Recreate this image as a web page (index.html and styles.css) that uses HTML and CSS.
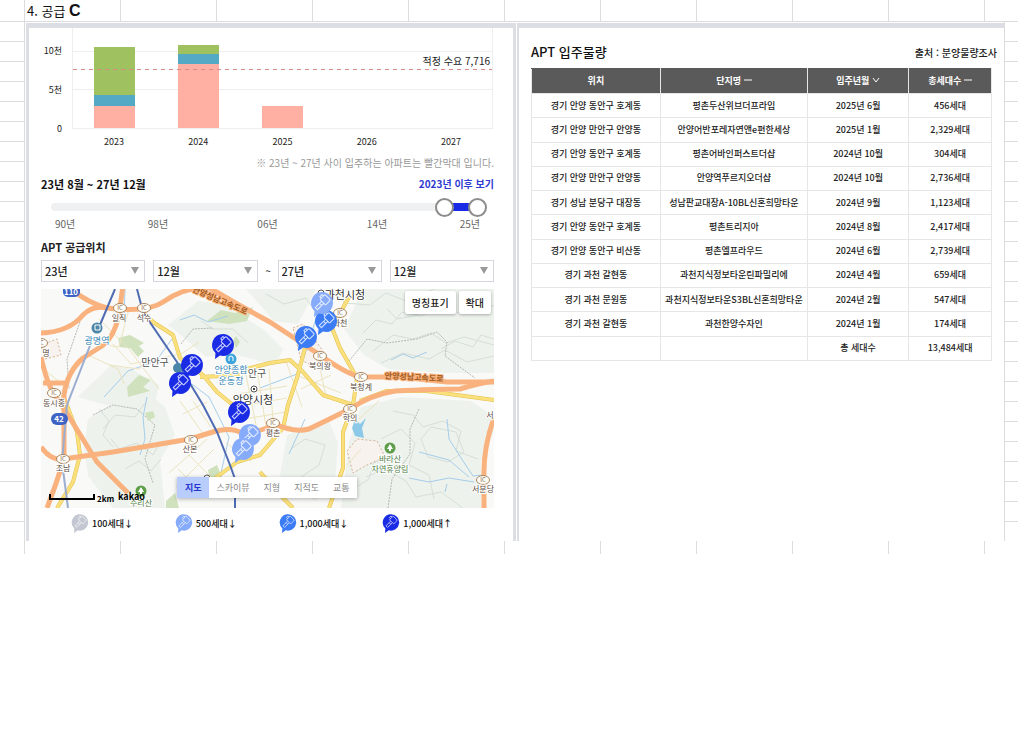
FILE: index.html
```html
<!DOCTYPE html>
<html lang="ko">

<head>
    <meta charset="UTF-8">
    <meta name="viewport" content="width=device-width, initial-scale=1.0">
    <title>공급</title>
    <link rel="stylesheet" href="styles.css">
</head>

<body>
    <div class="sheet">
        <header class="sheet-title">
            <h1>4. 공급 <b>C</b></h1>
        </header>
        <main class="sheet-body">
            <div class="gutter gutter-left"></div>
            <div class="panels">
                <section class="panel supply">
                    <div class="chart">
                        <div class="y-axis">
                            <span class="tick">10천</span>
                            <span class="tick">5천</span>
                            <span class="tick">0</span>
                        </div>
                        <div class="plot">
                            <div class="bar">
                                <i class="green" style="height: 48px"></i>
                                <i class="blue" style="height: 11px"></i>
                                <i class="pink" style="height: 22px"></i>
                            </div>
                            <div class="bar">
                                <i class="green" style="height: 9px"></i>
                                <i class="blue" style="height: 10px"></i>
                                <i class="pink" style="height: 64px"></i>
                            </div>
                            <div class="bar">
                                <i class="pink" style="height: 22px"></i>
                            </div>
                            <div class="bar"></div>
                            <div class="bar"></div>
                            <div class="demand">적정 수요 7,716</div>
                        </div>
                    </div>
                    <div class="x-axis">
                        <span>2023</span><span>2024</span><span>2025</span><span>2026</span><span>2027</span>
                    </div>
                    <p class="note">※ 23년 ~ 27년 사이 입주하는 아파트는 빨간막대 입니다.</p>

                    <div class="period">
                        <h2>23년 8월 ~ 27년 12월</h2>
                        <a href="#recent">2023년 이후 보기</a>
                    </div>
                    <div class="slider">
                        <div class="range"></div>
                        <input type="range" min="0" max="100" value="92" aria-label="시작">
                        <input type="range" min="0" max="100" value="100" aria-label="종료">
                    </div>
                    <div class="years">
                        <span>90년</span><span>98년</span><span>06년</span><span>14년</span><span>25년</span>
                    </div>

                    <h2 class="location-title">APT 공급위치</h2>
                    <div class="filters">
                        <div class="select"><select aria-label="시작 연도"><option>23년</option></select></div>
                        <div class="select"><select aria-label="시작 월"><option>12월</option></select></div>
                        <span class="tilde">~</span>
                        <div class="select"><select aria-label="종료 연도"><option>27년</option></select></div>
                        <div class="select"><select aria-label="종료 월"><option>12월</option></select></div>
                    </div>

                    <div class="map">
                        <svg class="map-canvas" viewBox="0 0 453 219" preserveAspectRatio="xMidYMid slice">
                            <defs>
                                <g id="pin">
                                    <path d="M0-11a11 11 0 1 1-3 21.600L-8 14l.5-6A11 11 0 0 1 0-11z"/>
                                    <g fill="none" stroke="#fff" stroke-opacity=".8" transform="rotate(45)">
                                        <rect x="-4" y="-8" width="8" height="7" rx="1"/>
                                        <path d="M-1.500-1V8h3v-9M-4-6h-2v3h2M-1.500 2h3"/>
                                    </g>
                                </g>
                                <g id="ic">
                                    <ellipse rx="6.500" ry="4.500" fill="#fffdf8" stroke="#a8845f"/>
                                    <text y="2" class="ic-text">IC</text>
                                </g>
                                <path id="main-roads" d="M102 23l10 10 20 13 7 23 23 17 14 17 16 13M159 88l43-2M202 81l27-7 20-3 13 12 20 23 30 10M309 6l-18 33 8 20 17 30-4 27-10 27v36l-14 40M264 59l-8 30-9 27-5 23-23 27-23 7-27 20M319 112l27-10h40l67 9M22 106l14 37 3 23-7 27-16 26M219 183l23 26 10 10"/>
                            </defs>

                            <!-- terrain -->
                            <g fill="#edf2ed">
                                <path d="M127 36l30-24 25 3 40 25 20 20-8 16-45-12-24 4-30-26z"/>
                                <path d="M47 130l30-20 25-10 22 18 10 28-15 25 5 48H72l-25-32-4-30z"/>
                                <path d="M205 0h70l-18 35-24-3zM322 0h131v84h-48l-58-4-24-14-20-26z"/>
                                <path d="M320 118l40-10 70 4 23 16v14l-13 30v47H300l8-66z"/>
                                <path d="M246 146l42-14 9 22-3 38-20 20-35-25z"/>
                                <path d="M70 76l20 4 28 16-4 18-35 6-42-12z"/>
                            </g>
                            <g fill="none" stroke="#d5dfd7">
                                <path d="M322 44l13-13 16 4 10-12 20 4 17-11 20 8 12-10 23 3M332 62l20-16 20 4 18-6 15 10 18-6 30 8"/>
                                <path d="M340 74l22-10 26 6 16-9 22 12 27-6M290 0l14 14 25 2 16-12 20 8 28-12"/>
                                <path d="M352 122l20 4 10 12 20-6 18 10-5 20 22 8M340 150l20-10 14 14-6 22 20 10 5 24M325 188l18-8 22 12 10 16 25-5 22 16"/>
                                <path d="M62 140l12-14 20 2 10-14M70 150l8 10 18-6 16 12 8-14M84 180l14-8 12 10 10-12M250 160l14-10 20 6-6 20-18 12"/>
                                <path d="M380 150l10-12 25 5 8 20-16 10-20-5zM225 5l18 10 22-6 8 12M160 32l12 8 20 0 15 14"/>
                                <path d="M400 60l14-8 18 6 8-12 13 4M346 20l10 10 22-4M58 120l10 12-6 14 10 12M312 200l16-10 4-16 16-6"/>
                            </g>
                            <g fill="none" stroke="#b5b9b2" stroke-dasharray="2 1">
                                <path d="M308 72l18-22 20 4 30-4 20-7 10 10-2 14 30 22M378 120l-9 20v25l-18 25-4 29M40 30l-14 40 2 30M140 55l12-15 20-1M52 126l20-10 24 4 18 16-10 34 8 24"/>
                            </g>
                            <g fill="#cfe2bd">
                                <path d="M166 32l14-11 14 3 18-6-6 14-18 3zM77 49l12-3 14 8-10 6-14-2zM90 60l8-3 5 5-6 6zM86 98l12-12 12 5-8 7 7 4-22 6zM104 124l8-2 2 6-7 4zM167 181l9-5 5 12-12 4zM125 212l9-8 4 15h-13z"/>
                                <path d="M195 47l4 6-4 6-3-7z"/>
                            </g>
                            <g fill="#f7f2ed" stroke="#d4b095" stroke-dasharray="2 2">
                                <path d="M306 162l10-12 20 2 8 16-18 8-14 8zM252 39l10-4 8 10 14 20-8 14-16-8z"/>
                                <path d="M0 56l16-6 4 16-16 4z"/>
                            </g>

                            <!-- water -->
                            <path d="M314 130l5 5 6-6-4 10 2 10-9-2-3-8z" fill="#8cc8e8"/>
                            <g fill="none" stroke="#a5cdea">
                                <path d="M84 0l-1 30M63 108l24-26 28-10 16-22M106 108l-4 20 2 22-5 16M139 31l14-5 14 7 20-6M350 71l12-6 10 4 14-6"/>
                                <path d="M406 130l2 20 14 22 10 15 10-1M378 163l30 8 20 17M368 189l20 4 20-4 25 4M404 203l2-8"/>
                                <path d="M281 10l-17 55-8 20-37 14M148 93l20 15 20 40-10 45M264 130l-16 35"/>
                            </g>

                            <!-- local streets -->
                            <g fill="none" stroke="#ece4bf">
                                <path d="M58 30l30 30 30 40M72 55l18 20 50-10 18-12M88 20l-10 38-28-4M106 70l-8 10-30-4M139 112l24 34 20-6M152 112l18 26M142 125l24-12M128 184l38-34M135 198l38-38M148 166l28 28M137 180l18 18M185 154l25 18"/>
                                <path d="M205 86l12 60M216 80l10 64M228 80l4 50M197 105l49-8M200 117l46-8M203 130l42-7M210 142l40-5M245 72l16 46M255 86l45 18M260 100l30-14M279 80l6 27M320 160l-14 16M318 130l20-18M45 65l32 15 6 15M0 78l20 16"/>
                            </g>
                            <g fill="none" stroke-linejoin="round">
                                <use href="#main-roads" stroke="#e3c050" stroke-width="4"/>
                                <use href="#main-roads" stroke="#fae07c" stroke-width="3"/>
                            </g>

                            <!-- expressways -->
                            <g fill="none" stroke="#f9b27e" stroke-width="5" stroke-linejoin="round">
                                <path d="M26-4q16 16 40 23 40 5 56-6 23-16 47-14 30 18 60 34l50 33q25 18 40 22h40l47 5h47"/>
                                <path d="M0 44q28-1 42-18 10-10 24-7M82-4l-3 23q-4 28-18 38l-19 12q-16 14-19 37v64q-8 26-17 49"/>
                                <path d="M0 68q6 26 12 35l15 23 29 47 31 31M0 158q10 14 22 12l50-7 77-13 26-8q15-4 26 2 26-2 31-10 20 10 36 6l41-20q20-14 45-18 40-2 65-2 20-6 34-8M2 94h22M453 129q-11 30-10 60v30"/>
                            </g>

                            <!-- rail -->
                            <g fill="none" stroke="#4f6cb3" stroke-width="2">
                                <path d="M74 0L56 43M96 0l6 23 34 50 26 43 14 27 13 33 5 14v29"/>
                                <path d="M50 54L26 116l-5 57 6 46" stroke="#9badd0"/>
                            </g>

                            <use href="#ic" x="79" y="19"/>
                            <use href="#ic" x="103" y="19"/>
                            <use href="#ic" x="0" y="54"/>
                            <use href="#ic" x="13" y="104"/>
                            <use href="#ic" x="22" y="170"/>
                            <use href="#ic" x="150" y="151"/>
                            <use href="#ic" x="232" y="134"/>
                            <use href="#ic" x="299" y="24"/>
                            <use href="#ic" x="279" y="67"/>
                            <use href="#ic" x="320" y="88"/>
                            <use href="#ic" x="309" y="120"/>
                            <use href="#ic" x="442" y="191"/>

                            <g class="road-badge">
                                <rect x="22" y="-5" width="17" height="13" rx="5"/>
                                <rect x="10" y="124" width="17" height="12" rx="6"/>
                                <text x="30" y="6">110</text>
                                <text x="18" y="133">42</text>
                            </g>
                            <g fill="#4b86a8">
                                <circle cx="56" cy="39" r="5.500"/>
                                <circle cx="137" cy="79" r="5"/>
                                <circle cx="190" cy="70" r="5.500" fill="#3da5dc"/>
                            </g>
                            <path d="M54 36h5v5h-5zM188 72v-4l2-1 2 1v4" fill="none" stroke="#fff"/>
                            <g fill="#fff" stroke="#555">
                                <circle cx="213" cy="100" r="3"/>
                                <circle cx="280" cy="4" r="3"/>
                                <circle cx="166" cy="189" r="3"/>
                            </g>
                            <circle cx="213" cy="100" r="1"/>
                            <g fill="#5e9d4a">
                                <circle cx="349" cy="159" r="5.500"/>
                                <circle cx="100" cy="202" r="5.500"/>
                            </g>
                            <path d="M349 155l3 5h-2v2h-2v-2h-2zM100 198l3 5h-2v2h-2v-2h-2z" fill="#fff"/>

                            <g class="place">
                                <text x="78" y="32">일직</text>
                                <text x="103" y="32">석수</text>
                                <text x="5" y="67">명</text>
                                <text x="13" y="117">동시흥</text>
                                <text x="22" y="182">조남</text>
                                <text x="149" y="163">산본</text>
                                <text x="232" y="147">평촌</text>
                                <text x="299" y="37">과천</text>
                                <text x="279" y="80">북의왕</text>
                                <text x="320" y="101">북청계</text>
                                <text x="309" y="132">학의</text>
                                <text x="442" y="203">서분당</text>
                                <text x="449" y="129">서</text>
                            </g>
                            <g class="place district">
                                <text x="114" y="77">만안구</text>
                                <text x="216" y="88">안구</text>
                            </g>
                            <g class="place city">
                                <text x="212" y="115">안양시청</text>
                                <text x="304" y="10">과천시청</text>
                            </g>
                            <g class="place station">
                                <text x="56" y="55">광명역</text>
                                <text x="190" y="84">안양종합</text>
                                <text x="190" y="95">운동장</text>
                            </g>
                            <g class="place park">
                                <text x="349" y="173">바라산</text>
                                <text x="349" y="183">자연휴양림</text>
                                <text x="100" y="217">수리산</text>
                            </g>
                            <g class="place highway">
                                <text transform="translate(178 14) rotate(23)">안양성남고속도로</text>
                                <text transform="translate(373 91) rotate(3)">안양성남고속도로</text>
                            </g>

                            <g class="pin-mid">
                                <use href="#pin" x="285" y="32"/>
                                <use href="#pin" x="265" y="48"/>
                            </g>
                            <g class="pin-low">
                                <use href="#pin" x="281" y="14"/>
                                <use href="#pin" x="209" y="146"/>
                                <use href="#pin" x="202" y="160"/>
                            </g>
                            <g class="pin-high">
                                <use href="#pin" x="182" y="56"/>
                                <use href="#pin" x="151" y="76"/>
                                <use href="#pin" x="139" y="94"/>
                                <use href="#pin" x="198" y="123"/>
                            </g>

                            <path d="M9 205v5h44v-5" fill="none" stroke="#000" stroke-width="2"/>
                            <text x="56" y="213" class="scale">2km</text>
                            <text x="77" y="211" class="logo">kakao</text>
                        </svg>
                        <div class="map-actions">
                            <button type="button">명칭표기</button>
                            <button type="button">확대</button>
                        </div>
                        <div class="map-types">
                            <button type="button" class="active">지도</button>
                            <button type="button">스카이뷰</button>
                            <button type="button">지형</button>
                            <button type="button">지적도</button>
                            <button type="button">교통</button>
                        </div>
                    </div>

                    <ul class="legend">
                        <li><svg class="pin-none" viewBox="-12 -12 24 27"><use href="#pin"/></svg>100세대↓</li>
                        <li><svg class="pin-low" viewBox="-12 -12 24 27"><use href="#pin"/></svg>500세대↓</li>
                        <li><svg class="pin-mid" viewBox="-12 -12 24 27"><use href="#pin"/></svg>1,000세대↓</li>
                        <li><svg class="pin-high" viewBox="-12 -12 24 27"><use href="#pin"/></svg>1,000세대↑</li>
                    </ul>
                </section>

                <section class="panel volume">
                    <div class="volume-head">
                        <h2>APT 입주물량</h2>
                        <span>출처 : 분양물량조사</span>
                    </div>
                    <table>
                        <thead>
                            <tr>
                                <th class="col-place">위치</th>
                                <th class="col-name">단지명 <svg class="sort" viewBox="0 0 8 8"><path d="M0 4h8"/></svg></th>
                                <th class="col-date">입주년월 <svg class="sort" viewBox="0 0 8 8"><path d="M1 2l3 4 3-4"/></svg></th>
                                <th class="col-count">총세대수 <svg class="sort" viewBox="0 0 8 8"><path d="M0 4h8"/></svg></th>
                            </tr>
                        </thead>
                        <tbody>
                            <tr><td>경기 안양 동안구 호계동</td><td>평촌두산위브더프라임</td><td>2025년 6월</td><td>456세대</td></tr>
                            <tr><td>경기 안양 만안구 안양동</td><td>안양어반포레자연앤e편한세상</td><td>2025년 1월</td><td>2,329세대</td></tr>
                            <tr><td>경기 안양 동안구 호계동</td><td>평촌어바인퍼스트더샵</td><td>2024년 10월</td><td>304세대</td></tr>
                            <tr><td>경기 안양 만안구 안양동</td><td>안양역푸르지오더샵</td><td>2024년 10월</td><td>2,736세대</td></tr>
                            <tr><td>경기 성남 분당구 대장동</td><td>성남판교대장A-10BL신혼희망타운</td><td>2024년 9월</td><td>1,123세대</td></tr>
                            <tr><td>경기 안양 동안구 호계동</td><td>평촌트리지아</td><td>2024년 8월</td><td>2,417세대</td></tr>
                            <tr><td>경기 안양 동안구 비산동</td><td>평촌엘프라우드</td><td>2024년 6월</td><td>2,739세대</td></tr>
                            <tr><td>경기 과천 갈현동</td><td>과천지식정보타운린파밀리에</td><td>2024년 4월</td><td>659세대</td></tr>
                            <tr><td>경기 과천 문원동</td><td>과천지식정보타운S3BL신혼희망타운</td><td>2024년 2월</td><td>547세대</td></tr>
                            <tr><td>경기 과천 갈현동</td><td>과천한양수자인</td><td>2024년 1월</td><td>174세대</td></tr>
                            <tr><td></td><td></td><td>총 세대수</td><td>13,484세대</td></tr>
                        </tbody>
                    </table>
                </section>
            </div>
            <div class="gutter gutter-right"></div>
        </main>
        <div class="sheet-foot"></div>
    </div>
</body>

</html>
```

FILE: styles.css
```css
:root {
    --cell-line: #dcdcde;
    --panel-line: #dddee3;
    --text: #222222;
    --primary: #1a2be6;
    --pin-mid: #3b7bf5;
    --pin-low: #86abfb;
    --pin-none: #c3c7d1;
}

* {
    box-sizing: border-box;
}

body {
    margin: 0;
    background: #ffffff;
    color: var(--text);
    font-family: "Noto Sans CJK KR", "Noto Sans", sans-serif;
    font-size: 10px;
    line-height: 16px;
}

h1, h2, p, ul {
    margin: 0;
    padding: 0;
}

h2 {
    font-size: 11px;
    line-height: 16px;
}

button, select {
    font-family: inherit;
}

/* spreadsheet cells round the panels */
.sheet-title,
.sheet-foot {
    background: repeating-linear-gradient(90deg, transparent 0 24px, var(--cell-line) 24px 25px, transparent 25px 96px);
}

.sheet-title {
    height: 22px;
    border-bottom: 1px solid var(--cell-line);
}

.sheet-title h1 {
    width: 92px;
    margin-left: 25px;
    padding-left: 2px;
    background: #ffffff;
    color: #111111;
    font-size: 13px;
    font-weight: 400;
    line-height: 21px;
}

.sheet-title b {
    font-family: "Liberation Sans", sans-serif;
    font-size: 16px;
}

.sheet-foot {
    height: 13px;
}

.sheet-body {
    display: flex;
}

.gutter {
    background: repeating-linear-gradient(180deg, transparent 0 19px, var(--cell-line) 19px 20px);
}

.gutter-left {
    flex: none;
    width: 25px;
    border-right: 1px solid var(--cell-line);
}

.gutter-right {
    flex: none;
    width: 14px;
    border-left: 1px solid var(--cell-line);
}

.panels {
    flex: 1;
    display: grid;
    grid-template-columns: 490fr 487fr;
    gap: 1px;
    padding: 1px 0 0 1px;
}

.panel {
    min-width: 0;
    border-top: 5px solid var(--panel-line);
}

.supply {
    padding: 0 19px 7px 12px;
    border-left: 3px solid var(--panel-line);
    border-right: 3px solid var(--panel-line);
}

.volume {
    padding: 14px 7px 0 12px;
    border-left: 2px solid var(--panel-line);
}

/* chart */
.chart {
    display: flex;
    height: 101px;
    padding-right: 1px;
}

.y-axis {
    flex: none;
    width: 31px;
    padding-top: 15px;
    padding-right: 10px;
    font-size: 9px;
    text-align: right;
}

.tick {
    display: block;
    height: 39px;
}

.plot {
    position: relative;
    flex: 1;
    display: grid;
    grid-template-columns: repeat(5, 1fr);
    align-items: end;
    justify-items: center;
    border: solid #eeeeee;
    border-width: 0 1px 1px;
    background: linear-gradient(#eeeeee, #eeeeee) 0 23px / 100% 1px no-repeat,
        linear-gradient(#eeeeee, #eeeeee) 0 61px / 100% 1px no-repeat;
}

.bar {
    width: 41px;
}

.bar i {
    display: block;
}

.green {
    background: #9fc160;
}

.blue {
    background: #54aac4;
}

.pink {
    background: #ffb0a2;
}

.demand {
    position: absolute;
    top: 25px;
    left: 0;
    right: 0;
    padding: 0 2px 1px 0;
    background: repeating-linear-gradient(90deg, #d98a86 0 4px, transparent 4px 8px) 0 100% / 100% 1px no-repeat;
    font-size: 10px;
    text-align: right;
}

.x-axis {
    display: grid;
    grid-template-columns: repeat(5, 1fr);
    padding: 5px 1px 0 31px;
    font-size: 9px;
    text-align: center;
}

.note {
    padding-top: 5px;
    color: #999999;
    font-size: 10px;
    text-align: right;
}

/* period slider */
.period {
    display: flex;
    justify-content: space-between;
    padding-top: 5px;
    color: #111111;
}

.period a {
    color: #2d3bd2;
    font-weight: 700;
    text-decoration: none;
}

.slider {
    position: relative;
    height: 18px;
    margin: 6px 7px 0 10px;
    padding: 5px 0;
}

.slider::before {
    content: "";
    display: block;
    height: 8px;
    border-radius: 4px;
    background: #eff0f2;
}

.range {
    position: absolute;
    top: 5px;
    left: 92%;
    right: 9px;
    height: 8px;
    background: var(--primary);
}

.slider input {
    -webkit-appearance: none;
    appearance: none;
    position: absolute;
    top: 0;
    left: 0;
    width: 100%;
    height: 18px;
    margin: 0;
    background: none;
    pointer-events: none;
}

.slider input::-webkit-slider-thumb {
    -webkit-appearance: none;
    width: 19px;
    height: 19px;
    border: 2px solid #8c8c8c;
    border-radius: 50%;
    background: #ffffff;
    pointer-events: auto;
}

.years {
    display: grid;
    grid-template-columns: 48fr 109fr 109fr 109fr 48fr;
    padding: 0 14px;
    color: #666666;
    font-size: 10px;
    text-align: center;
}

.years span:first-child {
    text-align: left;
}

.years span:last-child {
    text-align: right;
}

.location-title {
    padding-top: 7px;
}

.filters {
    display: flex;
    gap: 8px;
    padding-top: 5px;
}

.select {
    position: relative;
    flex: 1;
}

.select::after {
    content: "";
    position: absolute;
    top: 7px;
    right: 6px;
    border: solid transparent;
    border-width: 7px 4px 0;
    border-top-color: #999999;
    pointer-events: none;
}

.select select {
    -webkit-appearance: none;
    appearance: none;
    display: block;
    width: 100%;
    height: 22px;
    padding: 0 3px;
    border: 1px solid #d3d6dc;
    border-radius: 0;
    background: #ffffff;
    color: var(--text);
    font-size: 11px;
    font-weight: 500;
}

.tilde {
    width: 4px;
    line-height: 22px;
}

/* map */
.map {
    position: relative;
    height: 219px;
    margin-top: 7px;
    overflow: hidden;
    background: #f9f9f7;
}

.map-canvas {
    display: block;
    width: 100%;
    height: 100%;
}

.pin-high {
    fill: var(--primary);
}

.pin-mid {
    fill: var(--pin-mid);
}

.pin-low {
    fill: var(--pin-low);
}

.pin-none {
    fill: var(--pin-none);
}

.ic-text {
    fill: #8a6a4a;
    font-size: 6px;
    text-anchor: middle;
}

.road-badge {
    fill: #3f63c4;
}

.road-badge text {
    fill: #ffffff;
    font-size: 8px;
    font-weight: 700;
    text-anchor: middle;
}

.place {
    fill: #5c4c40;
    stroke: #ffffff;
    stroke-width: 2px;
    paint-order: stroke;
    font-size: 8px;
    text-anchor: middle;
}

.district {
    fill: #555555;
    font-size: 10px;
}

.city {
    fill: #333333;
    font-size: 11px;
}

.station {
    fill: #2f83b5;
    font-size: 9px;
}

.park {
    fill: #4a7a3c;
}

.highway {
    fill: #a05a1c;
    stroke: #f9b27e;
    font-weight: 700;
}

.scale {
    font-size: 8px;
    font-weight: 700;
}

.logo {
    font-size: 9px;
    font-weight: 700;
}

.map-actions {
    position: absolute;
    top: 2px;
    right: 3px;
    display: flex;
    gap: 3px;
}

.map-actions button {
    height: 23px;
    padding: 0 7px;
    border: 0;
    border-radius: 2px;
    background: #ffffff;
    box-shadow: 0 1px 3px rgba(0, 0, 0, 0.3);
    color: var(--text);
    font-size: 10px;
    font-weight: 500;
}

.map-types {
    position: absolute;
    left: 30%;
    bottom: 10px;
    display: flex;
    background: #ffffff;
    box-shadow: 0 1px 4px rgba(0, 0, 0, 0.3);
}

.map-types button {
    height: 21px;
    padding: 0 7px;
    border: 0;
    background: none;
    color: #888888;
    font-size: 9px;
    white-space: nowrap;
}

.map-types .active {
    padding: 0 8px;
    background: #b9cdfc;
    color: #2434d0;
    font-weight: 700;
}

.legend {
    display: grid;
    grid-template-columns: repeat(4, 1fr);
    padding: 5px 8px 0 30px;
    list-style: none;
}

.legend li {
    display: flex;
    align-items: center;
    gap: 3px;
    color: #111111;
    font-size: 9px;
    font-weight: 500;
    white-space: nowrap;
}

.legend svg {
    width: 18px;
    height: 21px;
}

/* table */
.volume-head {
    display: flex;
    justify-content: space-between;
    align-items: flex-end;
    padding-bottom: 7px;
}

.volume-head h2 {
    color: #111111;
    font-size: 13px;
    font-weight: 500;
    line-height: 19px;
}

.volume-head span {
    font-weight: 500;
    line-height: 16px;
}

table {
    width: calc(100% - 5px);
    height: 293px;
    border-collapse: collapse;
    table-layout: fixed;
    font-size: 9px;
    line-height: 14px;
    text-align: center;
}

th, td {
    padding: 0;
    border: 1px solid #e6e6e6;
    color: var(--text);
    font-weight: 500;
    white-space: nowrap;
}

th {
    height: 25px;
    border-top-color: #5a5a5a;
    background: #5a5a5a;
    color: #ffffff;
    font-weight: 700;
}

.col-place {
    width: 28%;
}

.col-name {
    width: 32%;
}

.col-date {
    width: 22%;
}

.sort {
    width: 8px;
    height: 8px;
    fill: none;
    stroke: #ffffff;
}
```
